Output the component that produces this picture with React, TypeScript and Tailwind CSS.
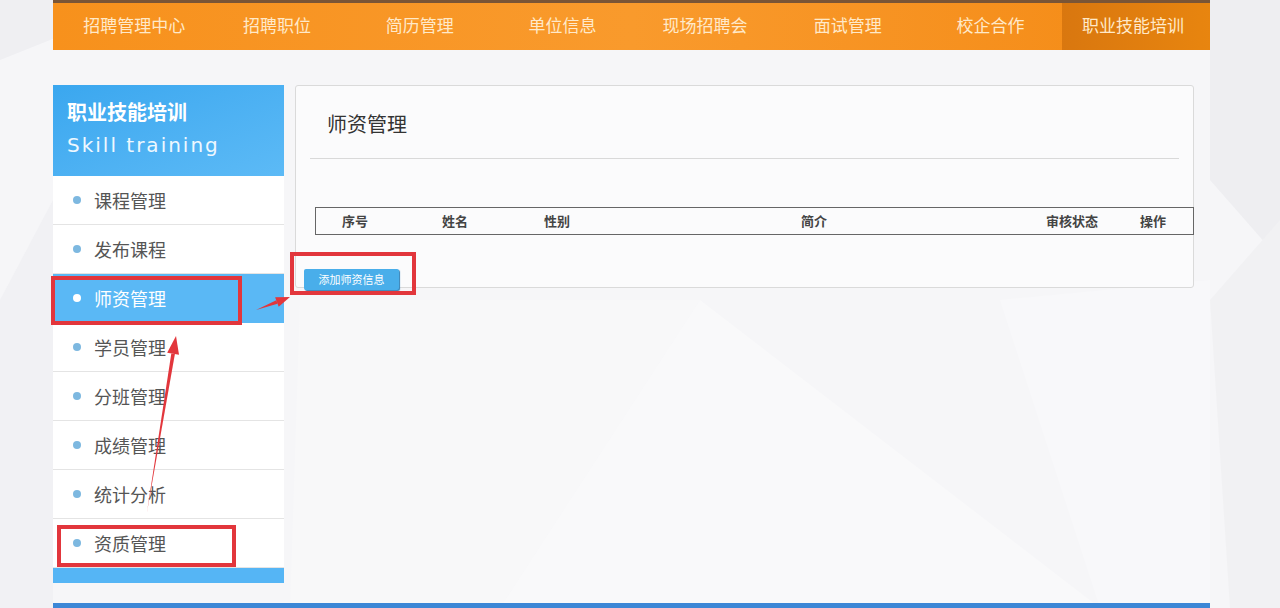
import React from 'react';

const navItems = ['招聘管理中心', '招聘职位', '简历管理', '单位信息', '现场招聘会', '面试管理', '校企合作', '职业技能培训'];

const menu = ['课程管理', '发布课程', '师资管理', '学员管理', '分班管理', '成绩管理', '统计分析', '资质管理'];

const columns = [
  { label: '序号', w: 'w-[100px]' },
  { label: '姓名', w: 'w-[102px]' },
  { label: '性别', w: 'w-[257px]' },
  { label: '简介', w: 'w-[245px]' },
  { label: '审核状态', w: 'w-[94px]' },
  { label: '操作', w: 'w-[50px]' },
];

const font = { fontFamily: '"Noto Sans CJK SC", "Noto Sans", sans-serif' };

function Backdrop() {
  // faint low-poly texture behind the page
  return (
    <svg className="absolute inset-0" width="1280" height="608" viewBox="0 0 1280 608">
      <rect width="1280" height="608" fill="#f6f6f8" />
      <polygon points="0,60 150,0 0,0" fill="#efeff2" />
      <polygon points="0,300 53,200 53,608 0,608" fill="#f1f1f4" />
      <polygon points="1210,0 1280,0 1280,260 1210,180" fill="#eeeef1" />
      <polygon points="1210,300 1280,220 1280,608 1230,608" fill="#f1f1f3" />
      <polygon points="700,300 1100,608 500,608" fill="#f9f9fa" />
      <polygon points="300,300 700,300 500,608 290,608" fill="#f8f8f9" />
      <polygon points="1000,300 1210,280 1210,608 1100,608" fill="#f8f8fa" />
    </svg>
  );
}

function Annotations() {
  return (
    <>
      <div className="pointer-events-none absolute left-[51px] top-[276px] h-[49px] w-[191px] border-[4px] border-[#e2363c]" />
      <div className="pointer-events-none absolute left-[290px] top-[252px] h-[43px] w-[126px] border-[4px] border-[#e2363c]" />
      <div className="pointer-events-none absolute left-[57px] top-[525px] h-[42px] w-[179px] border-[4px] border-[#e2363c]" />
      <svg className="pointer-events-none absolute left-0 top-0" width="1280" height="608" viewBox="0 0 1280 608">
        <polygon points="147,512 171.3,353.5 174.9,354.1" fill="#e2363c" />
        <polygon points="176,336 167.2,352.8 179,354.8" fill="#e2363c" />
        <polygon points="256,310 276.3,300.3 277.5,303.7" fill="#e2363c" />
        <polygon points="290,297 275.1,297.3 278.7,306.7" fill="#e2363c" />
      </svg>
    </>
  );
}

export default function App() {
  return (
    <div className="relative h-[608px] w-[1280px] overflow-hidden" style={font}>
      <Backdrop />
      <div className="relative">
        {/* top navigation */}
        <nav className="ml-[53px] grid h-[50px] w-[1157px] grid-cols-[repeat(7,142.7px)_1fr] border-t-[3px] border-[#7a5536] bg-gradient-to-r from-[#f7911c] via-[#f99a2c] to-[#f48a12] pl-[10px]">
          {navItems.map((item, i) => (
            <div
              key={item}
              className={
                'text-center text-[17px] leading-[44px] text-[#ffe9c9] ' +
                (i === navItems.length - 1 ? 'bg-gradient-to-r from-[#d9770f] to-[#e8850f] pr-[6px]' : '')
              }
            >
              {item}
            </div>
          ))}
        </nav>

        <div className="ml-[53px] mt-[35px] flex w-[1157px] items-start gap-[11px]">
          {/* sidebar */}
          <aside className="w-[231px]">
            <div className="h-[91px] bg-gradient-to-br from-[#3aa7ef] to-[#5cbaf6] pl-[14px] pt-[12px]">
              <div className="text-[20px] font-bold leading-[30px] text-white">职业技能培训</div>
              <div
                className="mt-[3px] text-[20px] leading-[30px] tracking-[2px] text-[#eef8ff]"
                style={{ fontFamily: '"DejaVu Sans", sans-serif' }}
              >
                Skill training
              </div>
            </div>
            {menu.map((m) => {
              const active = m === '师资管理';
              return (
                <div
                  key={m}
                  className={
                    'flex h-[49px] items-center gap-[13px] border-b pl-[20px] text-[18px] ' +
                    (active
                      ? 'border-[#5ab8f5] bg-[#5ab8f5] text-white'
                      : 'border-[#e4e4e4] bg-white text-[#555]')
                  }
                >
                  <span className={'h-[8px] w-[8px] rounded-full ' + (active ? 'bg-white' : 'bg-[#7db8e0]')} />
                  {m}
                </div>
              );
            })}
            <div className="h-[15px] bg-[#55b5f5]" />
          </aside>

          {/* content panel */}
          <section className="h-[203px] w-[899px] rounded-[3px] border border-[#dadada] bg-[#fbfbfc]">
            <h2 className="pl-[31px] pt-[24px] text-[20px] font-normal leading-[28px] text-[#333]">师资管理</h2>
            <div className="mx-[14px] mt-[20px] border-t border-[#d9d9d9]" />
            <div className="ml-[19px] mt-[48px] flex h-[28px] w-[879px] items-center border border-[#666] pl-[26px] text-[13px] font-bold text-[#444]">
              {columns.map((c) => (
                <div key={c.label} className={c.w}>
                  {c.label}
                </div>
              ))}
            </div>
            <div className="ml-[8px] mt-[30px]">
              <button className="h-[21px] w-[95px] rounded-[2px] bg-[#49aeea] text-[11px] text-white shadow-[1px_1px_1px_#2f7fb5]">
                添加师资信息
              </button>
            </div>
          </section>
        </div>

        <div className="ml-[53px] mt-[20px] h-[6px] w-[1157px] bg-[#3c87d6]" />
      </div>
      <Annotations />
    </div>
  );
}
